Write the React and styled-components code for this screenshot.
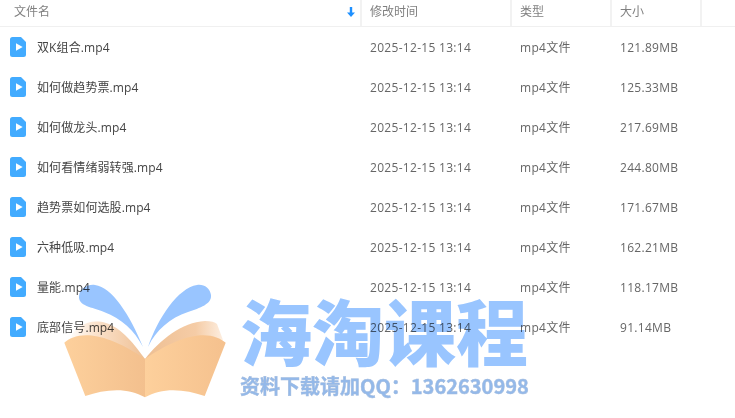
import styled, { createGlobalStyle } from 'styled-components';

const GlobalStyle = createGlobalStyle`
  html, body {
    margin: 0;
    padding: 0;
    background: #fff;
  }
`;

const columns = '362px 150px 100px 90px 1fr';

const Page = styled.div`
  position: relative;
  width: 735px;
  height: 418px;
  overflow: hidden;
  background: #fff;
  font-family: "Open Sans", "Noto Sans CJK SC", sans-serif;
  font-size: 12px;
`;

const Header = styled.div`
  display: grid;
  grid-template-columns: ${columns};
  height: 26px;
  border-bottom: 1px solid #f0f0f0;
`;

const HeaderCell = styled.div`
  display: flex;
  align-items: center;
  justify-content: space-between;
  padding: 0 5px 3px ${(p) => (p.$first ? '14px' : '8px')};
  border-right: ${(p) => (p.$last ? 'none' : '2px solid #f2f2f2')};
  color: #808080;
  line-height: 22px;
`;

const Row = styled.div`
  display: grid;
  grid-template-columns: ${columns};
  height: 40px;
  align-items: center;
`;

const NameCell = styled.div`
  display: flex;
  align-items: center;
  gap: 11px;
  padding-left: 10px;
  color: #444;
  letter-spacing: 0.1px;
`;

const Cell = styled.div`
  padding-left: 8px;
  color: #666;
  letter-spacing: 0.3px;
`;

const Watermark = styled.div`
  position: absolute;
  left: 240px;
  top: 288px;
  width: 290px;
  mix-blend-mode: multiply;
`;

const BrandName = styled.div`
  font-family: "Noto Sans CJK SC", sans-serif;
  font-weight: 900;
  font-size: 72px;
  line-height: 82px;
  color: #99c5ff;
  white-space: nowrap;
`;

const Contact = styled.div`
  font-family: "Noto Sans CJK SC", sans-serif;
  font-weight: 700;
  font-size: 20px;
  line-height: 24px;
  margin-top: 4px;
  color: #93b9ea;
  -webkit-text-stroke: 0.5px #a3bbdd;
  white-space: nowrap;
`;

const BookLogo = styled.svg`
  position: absolute;
  left: 60px;
  top: 280px;
  width: 175px;
  height: 125px;
  mix-blend-mode: multiply;
`;

const files = [
  { name: '双K组合.mp4', size: '121.89MB' },
  { name: '如何做趋势票.mp4', size: '125.33MB' },
  { name: '如何做龙头.mp4', size: '217.69MB' },
  { name: '如何看情绪弱转强.mp4', size: '244.80MB' },
  { name: '趋势票如何选股.mp4', size: '171.67MB' },
  { name: '六种低吸.mp4', size: '162.21MB' },
  { name: '量能.mp4', size: '118.17MB' },
  { name: '底部信号.mp4', size: '91.14MB' },
];

const VideoIcon = () => (
  <svg width="16" height="20" viewBox="0 0 16 20">
    <path d="M2.5 0H11L16 5V17.5a2.5 2.5 0 0 1-2.5 2.5H2.5A2.5 2.5 0 0 1 0 17.5V2.5A2.5 2.5 0 0 1 2.5 0Z" fill="#42abff" />
    <path d="M6 6.3L12.7 10L6 13.7Z" fill="#fff" />
  </svg>
);

const SortArrow = () => (
  <svg width="8" height="10" viewBox="0 0 8 10">
    <path d="M2.8 0H5.2V5.5H8L4 10L0 5.5H2.8Z" fill="#1e90ff" />
  </svg>
);

const Book = () => (
  <BookLogo viewBox="60 280 175 125">
    <defs>
      <linearGradient id="leftPage" x1="0" x2="1" y1="0" y2="0">
        <stop offset="0" stopColor="#fdd09c" />
        <stop offset="1" stopColor="#f3c08e" />
      </linearGradient>
      <linearGradient id="rightPage" x1="0" x2="1" y1="0" y2="0">
        <stop offset="0" stopColor="#fdd09c" />
        <stop offset="1" stopColor="#f5c18e" />
      </linearGradient>
      <linearGradient id="leftBack" x1="0" x2="1" y1="0" y2="0">
        <stop offset="0" stopColor="#fff" />
        <stop offset="0.35" stopColor="#fbe3cd" />
        <stop offset="1" stopColor="#eebf93" />
      </linearGradient>
      <linearGradient id="rightBack" x1="0" x2="1" y1="0" y2="0">
        <stop offset="0" stopColor="#eebf93" />
        <stop offset="0.65" stopColor="#f5cca6" />
        <stop offset="1" stopColor="#fdeee0" />
      </linearGradient>
    </defs>
    <path d="M143 347C134 330 122 319 104 312C92 307 78 306 79 296C80 288 88 284 95 285C112 287 130 315 143 347Z" fill="#99c5ff" />
    <path d="M148 347C156 330 170 318 188 312C200 308 212 304 211 295C210 288 204 284 197 285C178 288 158 318 148 347Z" fill="#99c5ff" />
    <path d="M70 338C76 326 90 318 106 323C122 328 135 345 145 359L146 361C118 343 90 333 68 341Z" fill="url(#leftBack)" />
    <path d="M145 359C160 340 182 322 205 321C211 321 215 322 217 324L223 340C200 333 170 343 146 361Z" fill="url(#rightBack)" />
    <path d="M64.3 342.7C75 333 100 328 145 359V397.3C128 387 105 389 85.3 396Z" fill="url(#leftPage)" />
    <path d="M225.7 342.7C214 333 190 328 145 359V397.3C162 387 185 389 204.7 396Z" fill="url(#rightPage)" />
  </BookLogo>
);

const App = () => (
  <Page>
    <GlobalStyle />
    <Header>
      <HeaderCell $first>
        文件名
        <SortArrow />
      </HeaderCell>
      <HeaderCell>修改时间</HeaderCell>
      <HeaderCell>类型</HeaderCell>
      <HeaderCell>大小</HeaderCell>
      <HeaderCell $last />
    </Header>
    {files.map((file) => (
      <Row key={file.name}>
        <NameCell>
          <VideoIcon />
          {file.name}
        </NameCell>
        <Cell>2025-12-15 13:14</Cell>
        <Cell>mp4文件</Cell>
        <Cell>{file.size}</Cell>
      </Row>
    ))}
    <Book />
    <Watermark>
      <BrandName>海淘课程</BrandName>
      <Contact>资料下载请加QQ：1362630998</Contact>
    </Watermark>
  </Page>
);

export default App;
